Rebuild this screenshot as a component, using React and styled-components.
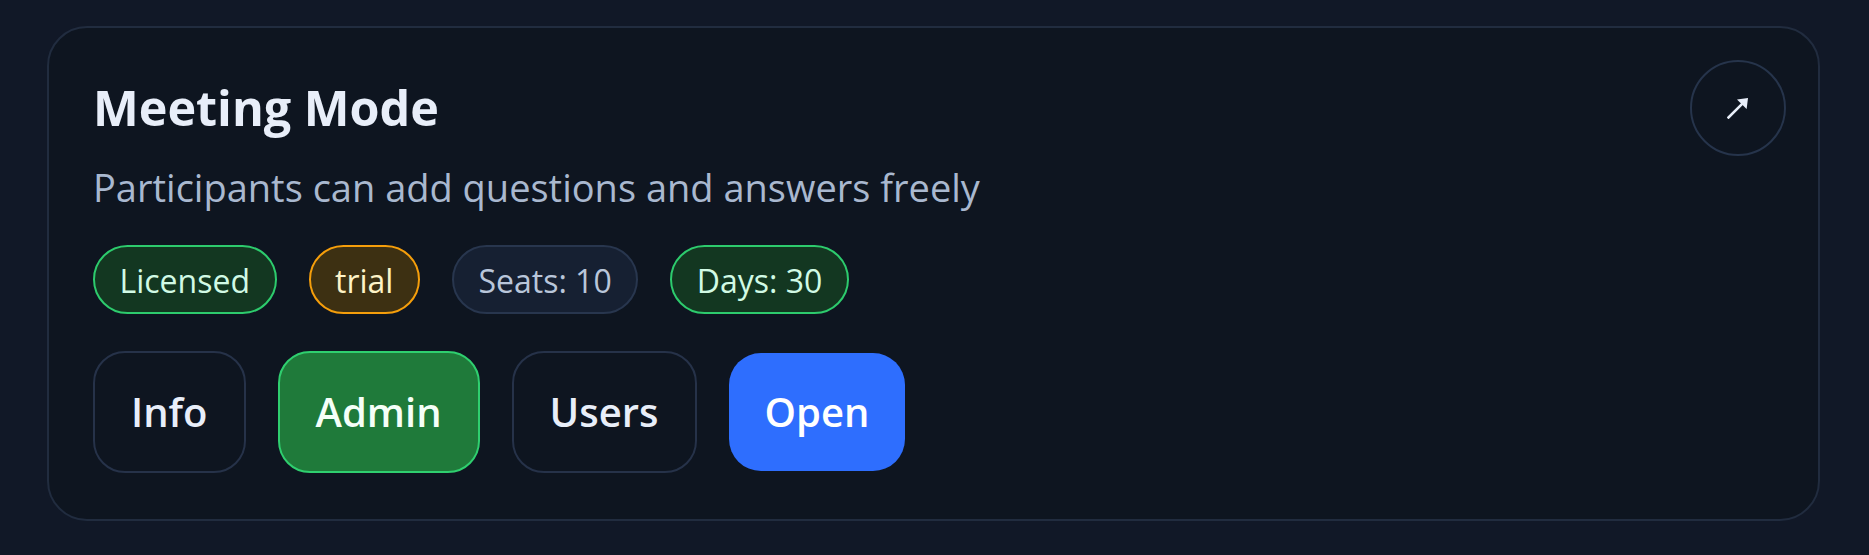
import React from "react";
import styled, { createGlobalStyle, css } from "styled-components";

const GlobalStyle = createGlobalStyle`
  html, body {
    margin: 0;
    padding: 0;
    background: #111827;
  }
  body {
    font-family: "Open Sans", "Noto Sans", "Liberation Sans", sans-serif;
    -webkit-font-smoothing: antialiased;
  }
  * { box-sizing: border-box; }
`;

const Page = styled.div`
  min-height: 555px;
  background: #111827;
  padding: 26px 49px 34px 47px;
`;

const Card = styled.section`
  position: relative;
  background: #0e1520;
  border: 2px solid #212c3f;
  border-radius: 40px;
  padding: 50px 44px 46px 44px;
`;

const Title = styled.h2`
  margin: 0;
  font-size: 48.5px;
  line-height: 58px;
  font-weight: 700;
  color: #e8eef9;
`;

const Subtitle = styled.p`
  margin: 23px 0 0;
  font-size: 38px;
  line-height: 57px;
  font-weight: 400;
  color: #a9b8cf;
`;

const BadgeRow = styled.div`
  display: flex;
  align-items: center;
  gap: 32px;
  margin-top: 29px;
`;

const badgeTones = {
  green: css`
    background: #133721;
    border-color: #2dcb6d;
    color: #d1fae5;
  `,
  amber: css`
    background: #3d3012;
    border-color: #f59e0b;
    color: #fef3c7;
  `,
  slate: css`
    background: #162032;
    border-color: #28364e;
    color: #b9c6da;
  `,
};

const Badge = styled.span`
  display: inline-flex;
  align-items: center;
  border: 2.5px solid;
  border-radius: 999px;
  padding: 12.5px 24.5px 10.5px;
  font-size: 32px;
  line-height: 42px;
  font-weight: 400;
  white-space: nowrap;
  ${(p) => badgeTones[p.$tone]}
`;

const ButtonRow = styled.div`
  display: flex;
  align-items: center;
  gap: 32px;
  margin-top: 37px;
`;

const buttonVariants = {
  outline: css`
    background: #0e1520;
    border: 2px solid #263249;
    color: #e8eef9;
  `,
  success: css`
    background: #1f7a3a;
    border: 2px solid #2fcf6f;
    color: #f5fff8;
  `,
  primary: css`
    background: #2e6efe;
    border: none;
    color: #ffffff;
  `,
};

const Button = styled.button`
  font-family: inherit;
  font-size: 40px;
  line-height: 60px;
  font-weight: 600;
  padding: 29px 36px;
  border-radius: 32px;
  cursor: pointer;
  ${(p) => buttonVariants[p.$variant]}
`;

const CornerButton = styled.button`
  position: absolute;
  top: 32px;
  right: 32px;
  width: 96px;
  height: 96px;
  border-radius: 50%;
  border: 2px solid #26344b;
  background: transparent;
  display: flex;
  align-items: center;
  justify-content: center;
  padding: 0;
  cursor: pointer;
`;

const ArrowIcon = () => (
  <svg width="22" height="22" viewBox="0 0 22 22" aria-hidden="true">
    <line x1="1.5" y1="20.5" x2="15" y2="7" stroke="#e8eef9" strokeWidth="2.6" strokeLinecap="square" />
    <polygon points="21,1 10,2.4 19.6,12" fill="#e8eef9" />
  </svg>
);

export default function App() {
  return (
    <>
      <GlobalStyle />
      <Page>
        <Card>
          <CornerButton aria-label="Open in new view">
            <ArrowIcon />
          </CornerButton>
          <Title>Meeting Mode</Title>
          <Subtitle>Participants can add questions and answers freely</Subtitle>
          <BadgeRow>
            <Badge $tone="green">Licensed</Badge>
            <Badge $tone="amber">trial</Badge>
            <Badge $tone="slate">Seats: 10</Badge>
            <Badge $tone="green">Days: 30</Badge>
          </BadgeRow>
          <ButtonRow>
            <Button $variant="outline">Info</Button>
            <Button $variant="success">Admin</Button>
            <Button $variant="outline">Users</Button>
            <Button $variant="primary">Open</Button>
          </ButtonRow>
        </Card>
      </Page>
    </>
  );
}
